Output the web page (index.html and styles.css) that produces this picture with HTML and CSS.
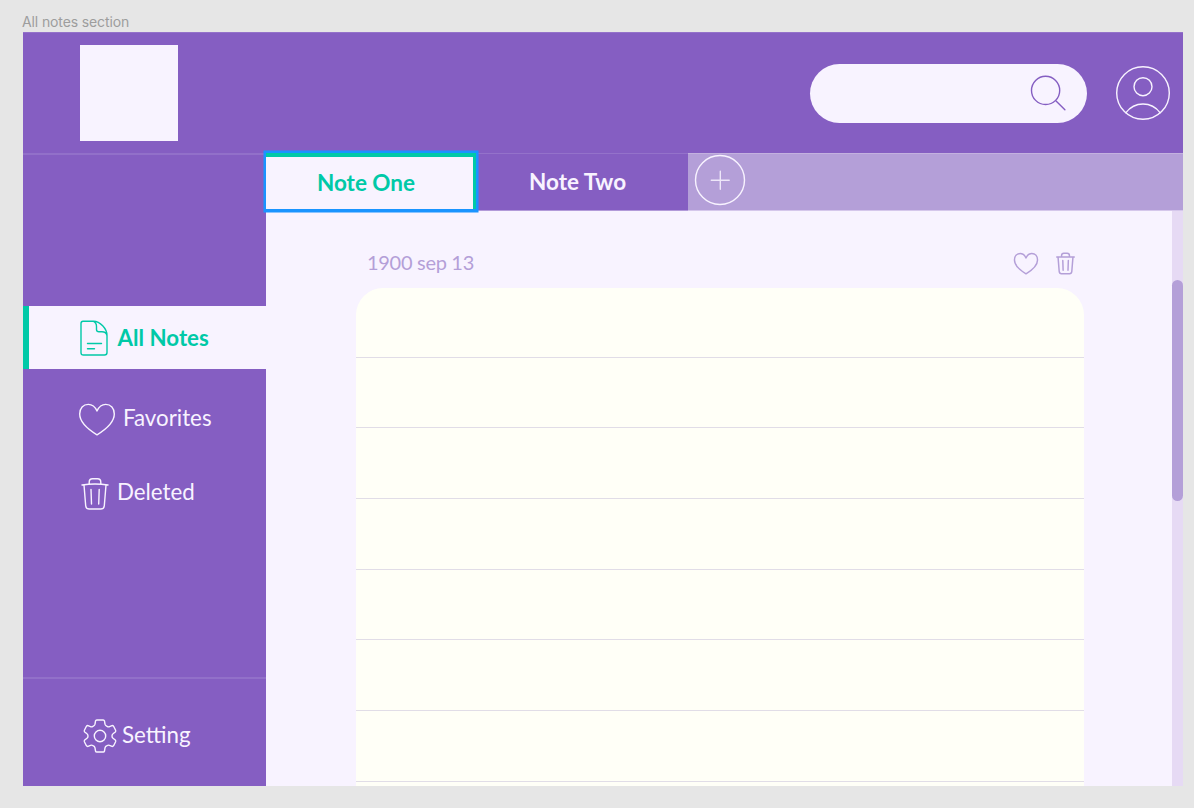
FILE: index.html
```html
<!DOCTYPE html>
<html lang="en">
<head>
<meta charset="utf-8">
<title>All notes section</title>
<link rel="stylesheet" href="styles.css">
</head>
<body>
<div class="frame-label">All notes section</div>
<div class="app">
  <header class="header">
    <div class="logo"></div>
    <div class="search">
      <svg width="38" height="38" viewBox="0 0 38 38"><circle cx="16.6" cy="16.4" r="14.1"/><path d="M26.8 26.7l9.1 9"/></svg>
    </div>
    <svg class="avatar" width="56" height="56" viewBox="0 0 56 56"><circle cx="28" cy="28" r="26.3"/><circle cx="28" cy="21.7" r="9"/><path d="M10.8 47.8C15 42.200 21 39 28 39s13 3.200 17.200 8.800"/></svg>
  </header>
  <div class="body">
    <nav class="sidebar">
      <a class="item item-active">
        <svg class="icon-doc" width="30" height="38" viewBox="0 0 30 38"><path d="M4 2.300H14.500C21 2.300 28 9.500 28 16.500V33.500q0 2.500-2.500 2.500H4.500Q2 36 2 33.500V4.500Q2 2.300 4 2.300ZM14.500 2.300Q17.500 3.500 17.500 7.500V10.500Q17.500 12.700 20 12.700H23Q27 12.700 28 16.500M8.500 24.500H22.500M8.500 29.700H15.500"/></svg>
        <span>All Notes</span>
      </a>
      <a class="item item-favorites">
        <svg width="38" height="36" viewBox="0 0 38 36"><path d="M19 9C17 4.500 13.800 2.400 10.300 2.400C5.200 2.400 1.700 6.200 1.700 12C1.700 20 9.500 27 19 32.800C28.500 27 36.300 20 36.300 12C36.300 6.200 32.800 2.400 27.700 2.400C24.200 2.400 21 4.500 19 9Z"/></svg>
        <span>Favorites</span>
      </a>
      <a class="item item-deleted">
        <svg width="28" height="34" viewBox="0 0 28 34"><path d="M8.200 7V5.200Q8.200 1.700 11.500 1.700H16.500Q19.800 1.700 19.800 5.200V7M1 8Q14 6 27 8M3 8L4.700 28.800Q5 32 8 32H20Q23 32 23.300 28.800L25 8M10 12.500L10.500 27M18.200 12.500L17.700 27"/></svg>
        <span>Deleted</span>
      </a>
      <a class="item item-setting">
        <svg width="34" height="36" viewBox="0 0 34 36"><path d="M13.800 2H20.200Q21.200 2 21.500 3L22 6.200Q22.300 7.500 24 8.300Q25.500 9.200 26.500 8.600L29 7.600Q30 7.400 30.600 8.300L32.600 12.300Q33 13.300 32.300 14L30 15.800Q29 16.500 29 18T30 20.200L32.300 22Q33 22.700 32.600 23.700L30.600 27.700Q30 28.600 29 28.400L26.500 27.400Q25.500 26.800 24 27.700Q22.300 28.500 22 29.800L21.500 33Q21.200 34 20.200 34H13.800Q12.800 34 12.500 33L12 29.800Q11.700 28.500 10 27.700Q8.500 26.800 7.500 27.400L5 28.400Q4 28.600 3.400 27.700L1.400 23.700Q1 22.700 1.700 22L4 20.200Q5 19.500 5 18T4 15.800L1.700 14Q1 13.300 1.400 12.300L3.400 8.300Q4 7.400 5 7.600L7.500 8.600Q8.500 9.200 10 8.300Q11.700 7.500 12 6.200L12.500 3Q12.800 2 13.800 2Z"/><circle cx="17" cy="18" r="5.700"/></svg>
        <span>Setting</span>
      </a>
    </nav>
    <main class="main">
      <div class="tabs">
        <div class="tab tab-one"><span>Note One</span></div>
        <div class="tab tab-two"><span>Note Two</span></div>
        <svg class="add" width="52" height="52" viewBox="0 0 52 52"><circle cx="26" cy="26" r="24.500"/><path class="plus" d="M17.300 26.200H35.200M26.300 17.200V35.200"/></svg>
      </div>
      <div class="content">
        <section class="note">
          <div class="note-head">
            <span class="date">1900 sep 13</span>
            <svg class="heart" width="26" height="24" viewBox="0 0 38 36"><path d="M19 9C17 4.500 13.800 2.400 10.300 2.400C5.200 2.400 1.700 6.200 1.700 12C1.700 20 9.500 27 19 32.800C28.500 27 36.300 20 36.300 12C36.300 6.200 32.800 2.400 27.700 2.400C24.200 2.400 21 4.500 19 9Z"/></svg>
            <svg class="trash" width="19" height="23" viewBox="0 0 28 34"><path d="M8.200 7V5.200Q8.200 1.700 11.500 1.700H16.500Q19.800 1.700 19.800 5.200V7M1 7.500H27M3 8L4.700 28.800Q5 32 8 32H20Q23 32 23.300 28.800L25 8M10 12.500L10.500 27M18.200 12.500L17.700 27"/></svg>
          </div>
          <div class="paper">
            <div class="line first"></div><div class="line"></div><div class="line"></div><div class="line"></div><div class="line"></div><div class="line"></div><div class="line"></div>
          </div>
        </section>
        <div class="track"><div class="thumb"></div></div>
      </div>
    </main>
  </div>
</div>
</body>
</html>
```
FILE: styles.css
```css
* { box-sizing: border-box; }
body {
  margin: 0;
  width: 1194px;
  height: 808px;
  padding: 12px 11px 22px 23px;
  background: #e6e6e6;
  font-family: Carlito, Lato, "Open Sans", sans-serif;
  font-family: Lato, "Open Sans", sans-serif;
  overflow: hidden;
}
svg {
  display: block;
  flex: none;
  fill: none;
  stroke: #f8f3ff;
  stroke-width: 1.4;
  stroke-linecap: round;
  stroke-linejoin: round;
}
span { white-space: nowrap; }
.frame-label {
  height: 20px;
  margin-left: -1px;
  font: 14px/20px Inter, sans-serif;
  letter-spacing: -.12px;
  color: #9d9d9d;
}
.app { width: 1160px; height: 754px; background: #855ec2; overflow: hidden; }
.header {
  height: 121px;
  display: flex;
  align-items: flex-start;
  padding: 12px 12px 0 57px;
  border-top: 1px solid #9472ca;
}
.logo { width: 98px; height: 96px; background: #f8f3ff; }
.search {
  width: 277px;
  height: 59px;
  margin: 19px 0 0 auto;
  padding: 10px 20px 0 0;
  display: flex;
  justify-content: flex-end;
  border-radius: 30px;
  background: #f8f3ff;
}
.search svg { stroke: #855ec2; }
.avatar { margin: 20.300px 0 0 28px; }
.body { height: 633px; display: flex; }
.sidebar {
  width: 243px;
  height: 633px;
  display: flex;
  flex-direction: column;
  border-top: 2px solid #9270c9;
  padding-top: 151px;
}
.item {
  display: flex;
  align-items: center;
  flex: none;
  color: #f8f3ff;
  font-size: 22.300px;
  line-height: 30px;
}
.item-active {
  height: 63px;
  border-left: 6px solid #00c9a7;
  padding-left: 50px;
  gap: 9px;
  background: #f8f3ff;
  color: #00c9a7;
  font-weight: 700;
}
.item-active svg { stroke: #00c9a7; margin-left: -.5px; }
.item-favorites { margin-top: 34px; height: 34px; padding-left: 55px; gap: 7px; }
.item-deleted { margin-top: 39px; height: 36px; padding-left: 58px; gap: 8px; }
.item-setting {
  margin-top: auto;
  height: 109px;
  border-top: 2px solid #9270c9;
  padding: 7px 0 0 60px;
  gap: 5px;
}
.item-favorites span, .item-deleted span, .item-setting span { padding-bottom: 5px; }
.item-setting span { padding-bottom: 3px; }
.main { width: 917px; height: 633px; background: #f8f3ff; }
.tabs {
  height: 58px;
  display: flex;
  background: #b49fd8;
  border-top: 1px solid #c3b1df;
  border-bottom: 1px solid #d5c7eb;
}
.tab {
  flex: none;
  display: flex;
  align-items: center;
  justify-content: center;
  font-size: 22.500px;
  font-weight: 700;
}
.tab-one {
  position: relative;
  width: 214px;
  height: 61px;
  margin: -3px 0 0 -2px;
  padding: 2px 10px 0 0;
  color: #00c9a7;
  background: #f8f3ff;
  border: 2px solid #1a94ff;
  border-bottom-width: 3px;
  box-shadow: inset -3px 4px #00c9a7, 0 0 0 .5px #1a94ff;
}
.tab-two {
  width: 210px;
  height: 58px;
  margin-top: -1px;
  padding: 0 11px 1px 0;
  color: #f8f3ff;
  background: #855ec2;
  border-top: 1px solid #9472ca;
  border-bottom: 1px solid #b29ad9;
}
.add { margin: -.5px 0 0 6px; }
.plus { stroke-width: 1.4; opacity: .85; }
.content { display: flex; height: 575px; }
.note { width: 906px; padding: 0 88px 0 90px; }
.note-head {
  height: 77px;
  padding: 28px 9px 0 11px;
  display: flex;
  align-items: flex-start;
}
.date { color: #b49fd8; font-size: 20px; line-height: 30px; margin-top: 8px; letter-spacing: -.3px; }
.heart { margin: 13px 17px 0 auto; }
.heart, .trash { stroke: #b49fd8; stroke-width: 2.2; }
.trash { margin-top: 13px; }
.paper {
  height: 498px;
  border-radius: 27px 27px 0 0;
  background: #fffff7;
  overflow: hidden;
}
.line { height: 70.700px; border-bottom: 1.400px solid #e1dde7; }
.line.first { height: 69.600px; }
.track { width: 11px; height: 575px; padding-top: 69px; background: #e6daf4; }
.thumb { height: 221px; border-radius: 6px; background: #b49fd8; }
```
